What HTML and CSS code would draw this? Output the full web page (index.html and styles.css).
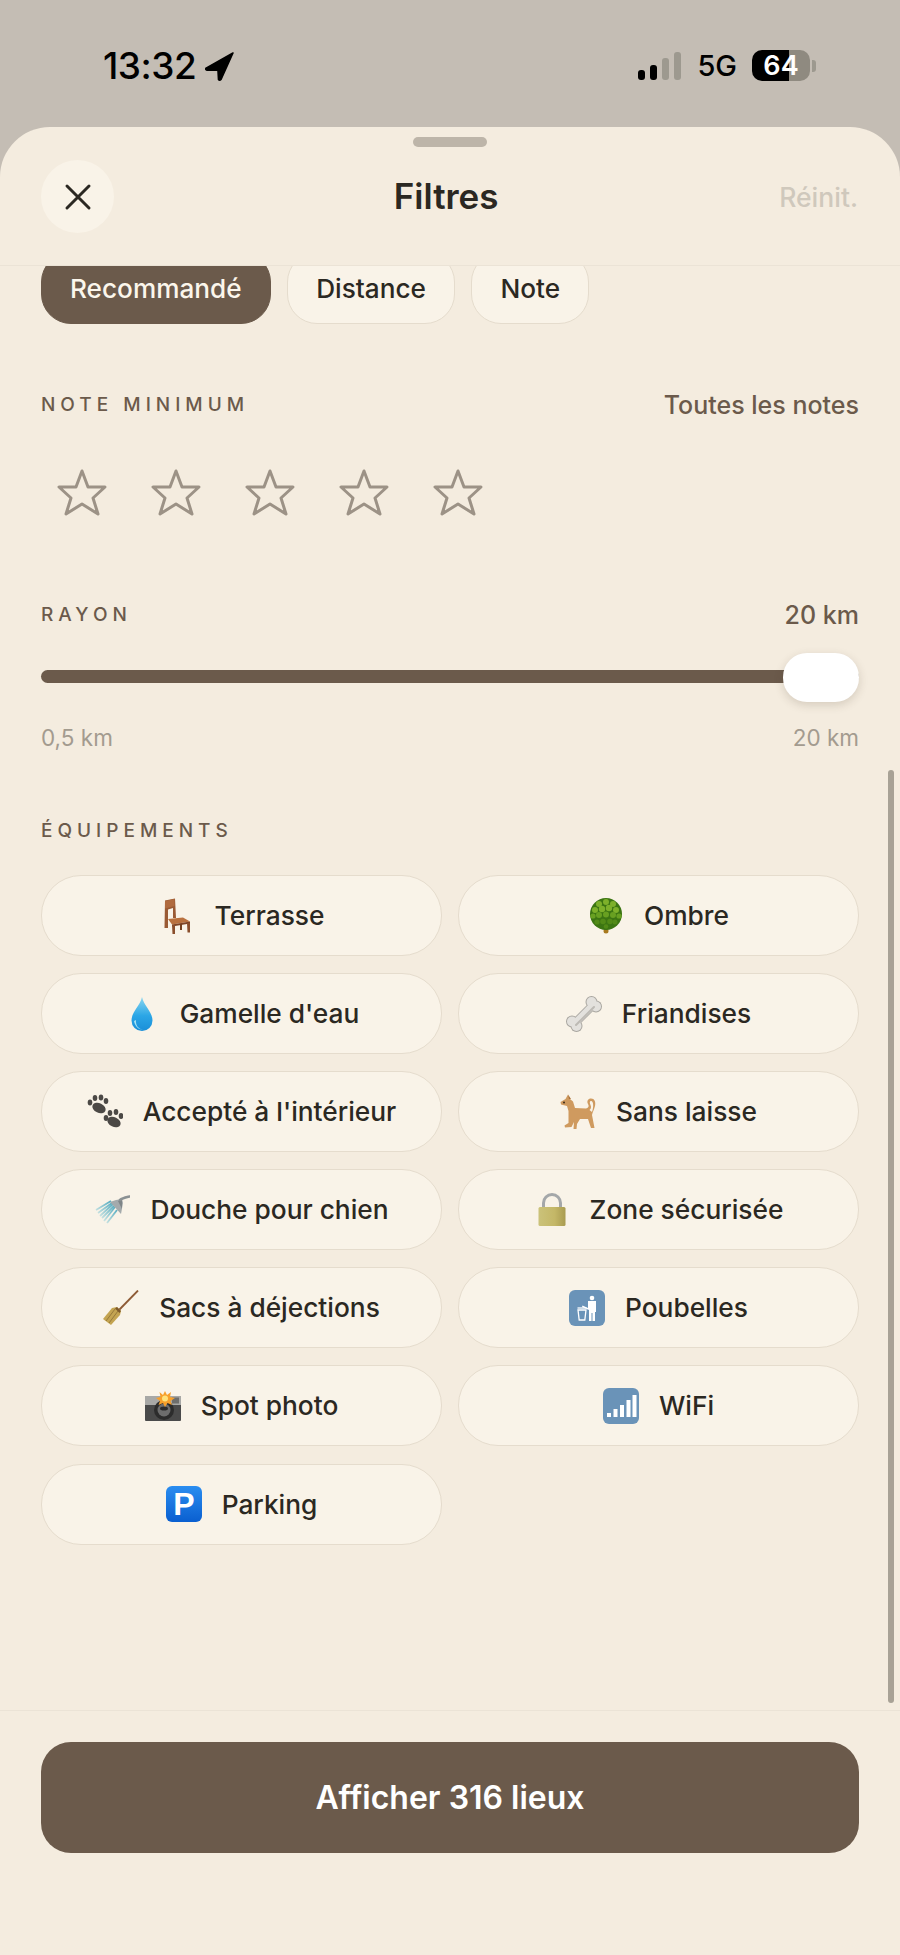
FILE: index.html
```html
<!DOCTYPE html>
<html lang="fr">
<head>
    <meta charset="UTF-8">
    <meta name="viewport" content="width=device-width, initial-scale=1.0">
    <title>Filtres</title>
    <link rel="stylesheet" href="styles.css">
</head>
<body>
    <div class="status-bar">
        <div class="status-left">
            <span class="time">13:32</span>
            <svg class="location" viewBox="0 0 28 28"><path d="M27 1 L1 15.5 Q0 17 2 17.5 L12.5 17.5 L13 26.5 Q14 28 15.5 26.5 Z" fill="#000" stroke="#000" stroke-width="1.5" stroke-linejoin="round"/></svg>
        </div>
        <div class="status-right">
            <div class="signal">
                <span class="bar bar-1"></span>
                <span class="bar bar-2"></span>
                <span class="bar bar-3"></span>
                <span class="bar bar-4"></span>
            </div>
            <span class="network">5G</span>
            <div class="battery">64</div>
            <span class="battery-cap"></span>
        </div>
    </div>

    <div class="sheet">
        <div class="handle"></div>

        <div class="sheet-header">
            <button class="close-btn" title="Fermer">
                <svg viewBox="0 0 28 28" width="28" height="28"><path d="M3 3 L25 25 M25 3 L3 25" stroke="#2b2822" stroke-width="3" stroke-linecap="round"/></svg>
            </button>
            <h1>Filtres</h1>
            <button class="reset-btn">Réinit.</button>
        </div>

        <div class="sheet-body">
            <div class="sort-row">
                <button class="sort-chip active">Recommandé</button>
                <button class="sort-chip">Distance</button>
                <button class="sort-chip">Note</button>
            </div>

            <div class="section-row first">
                <span class="section-label">NOTE MINIMUM</span>
                <span class="section-value">Toutes les notes</span>
            </div>
            <div class="stars">
                <svg class="star" viewBox="0 0 50 48"><path d="M25 2 L31 18 H48 L36 29 L41 45 L25 35 L9 45 L14 29 L2 18 H19 Z"/></svg>
                <svg class="star" viewBox="0 0 50 48"><path d="M25 2 L31 18 H48 L36 29 L41 45 L25 35 L9 45 L14 29 L2 18 H19 Z"/></svg>
                <svg class="star" viewBox="0 0 50 48"><path d="M25 2 L31 18 H48 L36 29 L41 45 L25 35 L9 45 L14 29 L2 18 H19 Z"/></svg>
                <svg class="star" viewBox="0 0 50 48"><path d="M25 2 L31 18 H48 L36 29 L41 45 L25 35 L9 45 L14 29 L2 18 H19 Z"/></svg>
                <svg class="star" viewBox="0 0 50 48"><path d="M25 2 L31 18 H48 L36 29 L41 45 L25 35 L9 45 L14 29 L2 18 H19 Z"/></svg>
            </div>

            <div class="section-row radius">
                <span class="section-label">RAYON</span>
                <span class="section-value">20 km</span>
            </div>
            <div class="slider">
                <div class="slider-track"></div>
                <div class="slider-thumb"></div>
            </div>
            <div class="slider-scale">
                <span>0,5 km</span>
                <span>20 km</span>
            </div>

            <div class="section-label equip-label">ÉQUIPEMENTS</div>
            <div class="equip-grid">
                <button class="equip-chip">
                    <svg class="emoji" viewBox="0 0 36 36">
                        <path d="M6 2.500 L16 0.500 L17 20 H14 V10 L9 11.500 V30 H5.500 Z" fill="#9a5a34"/>
                        <path d="M6 3 L15.500 1 V8 L6 10.500 Z" fill="#b06a3e"/>
                        <path d="M9 21 L24 19.500 L31 23.500 L13 26.500 Z" fill="#b9713f"/>
                        <path d="M13 26.500 L31 23.500 V25.500 L13 28.500 Z" fill="#7f4526"/>
                        <path d="M13 27 H16 V36 H13.500 Z M28 25 H31 V34.500 H28.500 Z" fill="#8a4e2c"/>
                        <path d="M21 26 H23 V32 H21 Z" fill="#74401f"/>
                    </svg>
                    <span>Terrasse</span>
                </button>
                <button class="equip-chip">
                    <svg class="emoji" viewBox="0 0 36 36">
                        <circle cx="18" cy="33" r="2.500" fill="#a8791e"/>
                        <circle cx="18" cy="16" r="16" fill="#3c7512"/>
                        <g fill="#7db02a">
                            <circle cx="11" cy="6" r="3"/>
                            <circle cx="18" cy="4" r="3"/>
                            <circle cx="25" cy="6" r="3"/>
                            <circle cx="7" cy="12" r="3"/>
                            <circle cx="14" cy="11" r="3.200"/>
                            <circle cx="21" cy="10" r="3.200"/>
                            <circle cx="28" cy="12" r="3"/>
                        </g>
                        <g fill="#68a021">
                            <circle cx="5" cy="18" r="2.600"/>
                            <circle cx="11" cy="17" r="3"/>
                            <circle cx="18" cy="16.500" r="3"/>
                            <circle cx="25" cy="17" r="3"/>
                            <circle cx="31" cy="18" r="2.600"/>
                        </g>
                        <g fill="#528a17">
                            <circle cx="9" cy="24" r="2.600"/>
                            <circle cx="15" cy="23.500" r="2.800"/>
                            <circle cx="22" cy="23.500" r="2.800"/>
                            <circle cx="27" cy="24" r="2.500"/>
                            <circle cx="18" cy="28.500" r="2.300"/>
                        </g>
                    </svg>
                    <span>Ombre</span>
                </button>
                <button class="equip-chip">
                    <svg class="emoji" viewBox="0 0 36 36">
                        <defs>
                            <linearGradient id="drop" x1="0" y1="0" x2="0" y2="1">
                                <stop offset="0" stop-color="#8ad6ef"/>
                                <stop offset="0.55" stop-color="#2ba6e6"/>
                                <stop offset="1" stop-color="#1b8fd8"/>
                            </linearGradient>
                        </defs>
                        <path d="M18 1 C20 10 28.500 16 28.500 24.500 A10.500 10.500 0 0 1 7.500 24.500 C7.500 16 16 10 18 1 Z" fill="url(#drop)"/>
                        <path d="M10 25 C11 31 15 33.500 19 33.500 C14 33 11.500 29 12 24 Z" fill="#a5e3f5"/>
                    </svg>
                    <span>Gamelle d'eau</span>
                </button>
                <button class="equip-chip">
                    <svg class="emoji" viewBox="0 0 36 36">
                        <g fill="#a9a6a0">
                            <path d="M9 27 L27 9" stroke="#a9a6a0" stroke-width="8.500" stroke-linecap="round"/>
                            <circle cx="6" cy="25.500" r="6"/>
                            <circle cx="10.500" cy="30" r="6"/>
                            <circle cx="25.500" cy="6" r="6"/>
                            <circle cx="30" cy="10.500" r="6"/>
                        </g>
                        <g fill="#e3e1dd">
                            <path d="M9 27 L27 9" stroke="#e3e1dd" stroke-width="6.800" stroke-linecap="round"/>
                            <circle cx="6" cy="25.500" r="5"/>
                            <circle cx="10.500" cy="30" r="5"/>
                            <circle cx="25.500" cy="6" r="5"/>
                            <circle cx="30" cy="10.500" r="5"/>
                        </g>
                        <path d="M10 29 L28 11" stroke="#bdbab4" stroke-width="2" stroke-linecap="round"/>
                    </svg>
                    <span>Friandises</span>
                </button>
                <button class="equip-chip">
                    <svg class="emoji" viewBox="0 0 36 36" fill="#4b4845">
                        <ellipse cx="12" cy="14" rx="7" ry="4.800" transform="rotate(25 12 14)"/>
                        <ellipse cx="3" cy="8.500" rx="2.300" ry="3"/>
                        <ellipse cx="8" cy="4" rx="2.300" ry="3"/>
                        <ellipse cx="14" cy="3.500" rx="2.300" ry="3"/>
                        <ellipse cx="19" cy="7" rx="2.300" ry="3"/>
                        <ellipse cx="27" cy="28" rx="7" ry="4.800" transform="rotate(25 27 28)"/>
                        <ellipse cx="19" cy="24" rx="2.300" ry="3"/>
                        <ellipse cx="23" cy="19" rx="2.300" ry="3"/>
                        <ellipse cx="29" cy="18" rx="2.300" ry="3"/>
                        <ellipse cx="34" cy="22" rx="2.300" ry="3"/>
                    </svg>
                    <span>Accepté à l'intérieur</span>
                </button>
                <button class="equip-chip">
                    <svg class="emoji" viewBox="0 0 36 36">
                        <path d="M8 0.500 L10 5 L13 7.500 L15 14 L26 14.500 C28 14 29.500 12.500 28 10 C26.500 7 28 4.500 31 4.500 C34.500 4.500 36 8 35 12 C34 16 32.500 18 32 21 L34.500 34 H31 L28 25 L20 25 L17 30 L16.500 35 H13.500 L14 28 L11.500 33 L5 33.500 L4.500 31.500 L8.500 29 L8.500 17 L7 12 L1 10.500 L0.500 8 L5.500 5 Z" fill="#cf9a5f"/>
                        <path d="M31 7 C29.500 7 29.500 9 30.500 11 C31.500 13 31 15 29.500 16 L32 18 C33.500 14.500 34 7 31 7 Z" fill="#f9f3e8"/>
                        <path d="M9 5 L8 0.500 L11 5 Z" fill="#a8703a"/>
                        <circle cx="4" cy="8.500" r="1" fill="#3a2a1a"/>
                    </svg>
                    <span>Sans laisse</span>
                </button>
                <button class="equip-chip">
                    <svg class="emoji" viewBox="0 0 36 36">
                        <defs>
                            <linearGradient id="water" gradientUnits="userSpaceOnUse" x1="22" y1="14" x2="6" y2="28">
                                <stop offset="0" stop-color="#4fa9bf"/>
                                <stop offset="1" stop-color="#d9eae6"/>
                            </linearGradient>
                        </defs>
                        <g stroke="url(#water)" stroke-width="1.800" fill="none">
                            <path d="M17 9 L2 18"/>
                            <path d="M18 11 L4 21"/>
                            <path d="M19 12 L6 24"/>
                            <path d="M20 14 L8 26"/>
                            <path d="M21 15 L10 29"/>
                            <path d="M23 18 L13 31"/>
                        </g>
                        <path d="M22 8 L28 7 L29 11 L27 22 L16 10 Z" fill="#a4aaac"/>
                        <path d="M24 9 L28 8 L28 17 Z" fill="#7f8587"/>
                        <path d="M26 8 C28 6 31 5.500 35.500 4.500" fill="none" stroke="#8b9193" stroke-width="2.500" stroke-linecap="round"/>
                    </svg>
                    <span>Douche pour chien</span>
                </button>
                <button class="equip-chip">
                    <svg class="emoji" viewBox="0 0 36 36">
                        <defs>
                            <linearGradient id="brass" x1="0" y1="0" x2="1" y2="0">
                                <stop offset="0" stop-color="#cbc27a"/>
                                <stop offset="0.6" stop-color="#c4b767"/>
                                <stop offset="1" stop-color="#a99b50"/>
                            </linearGradient>
                        </defs>
                        <path d="M9.500 17 V11 A8.500 8.500 0 0 1 26.500 11 V17" fill="none" stroke="#a4a7a9" stroke-width="3"/>
                        <rect x="4.500" y="15" width="27" height="19" rx="1.500" fill="url(#brass)"/>
                    </svg>
                    <span>Zone sécurisée</span>
                </button>
                <button class="equip-chip">
                    <svg class="emoji" viewBox="0 0 36 36">
                        <path d="M16 20 L35 0.500" stroke="#8d5a35" stroke-width="1.800"/>
                        <path d="M14 17 L9 18 L0 29 L8 35 L17 25 L18 21 Z" fill="#c4a451"/>
                        <path d="M12 19 L3 31 M15 21 L6 33" stroke="#97793a" stroke-width="1"/>
                        <path d="M14 17 L18 21 L16.500 23 L12 18.500 Z" fill="#7e5a2c"/>
                    </svg>
                    <span>Sacs à déjections</span>
                </button>
                <button class="equip-chip">
                    <svg class="emoji" viewBox="0 0 36 36">
                        <rect width="36" height="36" rx="6" fill="#6a93b8"/>
                        <circle cx="23" cy="8" r="2.300" fill="#fff"/>
                        <path d="M19 11 H27 V22 H26 V31 H23.500 V23 H22.500 V31 H20 V20 L13 17 L13.500 15.500 L19 18 Z" fill="#fff"/>
                        <path d="M9 20 H17 L15.800 30 H10.200 Z" fill="none" stroke="#fff" stroke-width="1.300"/>
                        <path d="M8.500 18 H17.500" stroke="#fff" stroke-width="1.300"/>
                    </svg>
                    <span>Poubelles</span>
                </button>
                <button class="equip-chip">
                    <svg class="emoji" viewBox="0 0 36 36">
                        <rect x="0" y="8" width="36" height="25" rx="1" fill="#4a4a4a"/>
                        <rect x="0" y="8" width="36" height="9" fill="#a8a8a6"/>
                        <rect x="27" y="9.500" width="7" height="6" fill="#6e6e6c"/>
                        <circle cx="19" cy="22" r="10" fill="#2c2c2c"/>
                        <circle cx="19" cy="22" r="6.500" fill="#6d6d6d"/>
                        <ellipse cx="19" cy="20.500" rx="4" ry="2" fill="#2c2c2c"/>
                        <path d="M20 3 L22 7 L26 4 L25 9 L30 10 L25.500 13 L27 17 L22.500 15 L20 19 L18 15 L13.500 17 L15 13 L11 10 L15.500 9 L14.500 4 L18 7 Z" fill="#f7a02b"/>
                        <circle cx="20" cy="10.500" r="3" fill="#ffe27a"/>
                    </svg>
                    <span>Spot photo</span>
                </button>
                <button class="equip-chip">
                    <svg class="emoji" viewBox="0 0 36 36">
                        <rect width="36" height="36" rx="6" fill="#6a93b8"/>
                        <rect x="4" y="25" width="4" height="4" fill="#fff"/>
                        <rect x="10.500" y="21" width="4" height="8" fill="#fff"/>
                        <rect x="17" y="17" width="4" height="12" fill="#fff"/>
                        <rect x="23.500" y="12" width="4" height="17" fill="#fff"/>
                        <rect x="29.500" y="7" width="4" height="22" fill="#fff"/>
                    </svg>
                    <span>WiFi</span>
                </button>
                <button class="equip-chip">
                    <svg class="emoji" viewBox="0 0 36 36">
                        <defs>
                            <linearGradient id="pblue" x1="0" y1="0" x2="0" y2="1">
                                <stop offset="0" stop-color="#2a8df0"/>
                                <stop offset="1" stop-color="#0a5fd0"/>
                            </linearGradient>
                        </defs>
                        <rect width="36" height="36" rx="6" fill="url(#pblue)"/>
                        <text x="18" y="29" text-anchor="middle" class="parking-letter">P</text>
                    </svg>
                    <span>Parking</span>
                </button>
            </div>
        </div>

        <div class="scrollbar"></div>

        <div class="sheet-footer">
            <button class="apply-btn">Afficher 316 lieux</button>
        </div>
    </div>
</body>
</html>
```

FILE: styles.css
```css
* {
    margin: 0;
    padding: 0;
    box-sizing: border-box;
}

body {
    font-family: Inter, "Noto Sans", sans-serif;
    background: #c4bdb4;
    height: 1955px;
    display: flex;
    flex-direction: column;
    color: #2b2822;
    overflow: hidden;
}

button {
    font-family: inherit;
    border: none;
    background: none;
}

.status-bar {
    height: 127px;
    flex-shrink: 0;
    display: flex;
    justify-content: space-between;
    padding: 46px 84px 0 103px;
    color: #000;
}

.status-left {
    display: flex;
    align-items: flex-start;
    gap: 9px;
}

.time {
    font-size: 37px;
    font-weight: 500;
    line-height: 40px;
    letter-spacing: -0.5px;
}

.location {
    width: 29px;
    height: 29px;
    margin-top: 6px;
}

.status-right {
    display: flex;
    align-items: flex-start;
    height: 40px;
}

.signal {
    display: flex;
    align-items: flex-end;
    gap: 5px;
    height: 28px;
    margin-top: 6px;
}

.bar {
    width: 7px;
    border-radius: 3px;
    background: #000;
}

.bar-1 { height: 10px; }
.bar-2 { height: 15px; }
.bar-3 { height: 22px; background: #9d998f; }
.bar-4 { height: 28px; background: #9d998f; }

.network {
    font-size: 29px;
    font-weight: 500;
    line-height: 40px;
    margin-left: 16px;
}

.battery {
    width: 58px;
    height: 31px;
    margin: 4px 0 0 15px;
    border-radius: 10px;
    background: linear-gradient(90deg, #000 63%, #8f8a80 63%);
    color: #fff;
    font-size: 27px;
    font-weight: 600;
    line-height: 31px;
    text-align: center;
}

.battery-cap {
    width: 4px;
    height: 12px;
    margin: 14px 0 0 2px;
    border-radius: 0 3px 3px 0;
    background: #9d998f;
}

.sheet {
    flex: 1;
    min-height: 0;
    display: flex;
    flex-direction: column;
    position: relative;
    background: #f4ecdf;
    border-radius: 50px 50px 0 0;
    overflow: hidden;
}

.handle {
    width: 74px;
    height: 10px;
    margin: 10px auto 0;
    border-radius: 5px;
    background: #bdb5a9;
    flex-shrink: 0;
}

.sheet-header {
    flex-shrink: 0;
    height: 119px;
    display: flex;
    justify-content: space-between;
    align-items: flex-start;
    padding: 13px 41px 0;
    position: relative;
    border-bottom: 1px solid #ebe3d6;
}

.close-btn {
    width: 73px;
    height: 73px;
    border-radius: 50%;
    background: #f9f3e8;
    display: flex;
    align-items: center;
    justify-content: center;
}

h1 {
    font-size: 35px;
    font-weight: 600;
    line-height: 44px;
    margin-top: 14px;
    margin-left: -1px;
}

.reset-btn {
    font-size: 26.5px;
    font-weight: 500;
    line-height: 36px;
    margin: 19px 1px 0 0;
    color: #cfc8bc;
}

.sheet-body {
    flex: 1;
    min-height: 0;
    padding: 0 41px;
    overflow: hidden;
}

.sort-row {
    display: flex;
    gap: 16.5px;
    margin-top: -14px;
}

.sort-chip {
    height: 72px;
    padding: 0 28px;
    border-radius: 30px;
    border: 1px solid #e5dccd;
    background: #f9f3e8;
    font-size: 26.2px;
    font-weight: 500;
    color: #2b2822;
}

.sort-chip.active {
    background: #6b5a4b;
    border-color: #6b5a4b;
    color: #fbf6ec;
}

.section-row {
    display: flex;
    justify-content: space-between;
    align-items: center;
    height: 30px;
}

.section-row.first {
    margin-top: 66px;
}

.section-row.radius {
    margin-top: 83px;
}

.section-label {
    font-size: 19px;
    font-weight: 500;
    line-height: 30px;
    letter-spacing: 5px;
    color: #6b5a4b;
}

.section-value {
    font-size: 25px;
    font-weight: 500;
    color: #6b5a4b;
}

.stars {
    display: flex;
    gap: 44px;
    margin: 49px 0 0 16px;
}

.star {
    width: 50px;
    height: 48px;
}

.star path {
    fill: none;
    stroke: #9c9286;
    stroke-width: 3;
    stroke-linejoin: round;
}

.slider {
    position: relative;
    height: 49px;
    margin-top: 23px;
}

.slider-track {
    height: 13px;
    border-radius: 7px;
    background: #6b5a4b;
    position: relative;
    top: 17px;
}

.slider-thumb {
    position: absolute;
    top: 0;
    right: 0;
    width: 76px;
    height: 49px;
    border-radius: 24px;
    background: #fff;
    box-shadow: 0 3px 10px rgba(70, 55, 40, 0.18);
}

.slider-scale {
    display: flex;
    justify-content: space-between;
    margin-top: 21px;
    font-size: 22.5px;
    line-height: 30px;
    color: #a39b8f;
}

.equip-label {
    display: block;
    margin-top: 63px;
}

.equip-grid {
    display: grid;
    grid-template-columns: 1fr 1fr;
    gap: 17.1px 16px;
    margin-top: 29px;
}

.equip-chip {
    height: 81px;
    border: 1px solid #e5dccd;
    border-radius: 40px;
    background: #f9f3e8;
    display: flex;
    align-items: center;
    justify-content: center;
    gap: 20px;
    font-size: 26.3px;
    font-weight: 500;
    color: #2b2822;
}

.emoji {
    width: 36px;
    height: 36px;
    flex-shrink: 0;
}

.parking-letter {
    font-family: "Liberation Sans", sans-serif;
    font-size: 32px;
    font-weight: 700;
    fill: #fff;
}

.scrollbar {
    position: absolute;
    top: 643px;
    right: 6px;
    width: 6px;
    height: 933px;
    border-radius: 3px;
    background: #a8a296;
}

.sheet-footer {
    flex-shrink: 0;
    height: 245px;
    padding: 31px 41px 0;
    border-top: 1px solid #ebe3d6;
}

.apply-btn {
    width: 100%;
    height: 111px;
    border-radius: 30px;
    background: #6b5a4b;
    color: #fff;
    font-size: 32px;
    font-weight: 600;
}
```
